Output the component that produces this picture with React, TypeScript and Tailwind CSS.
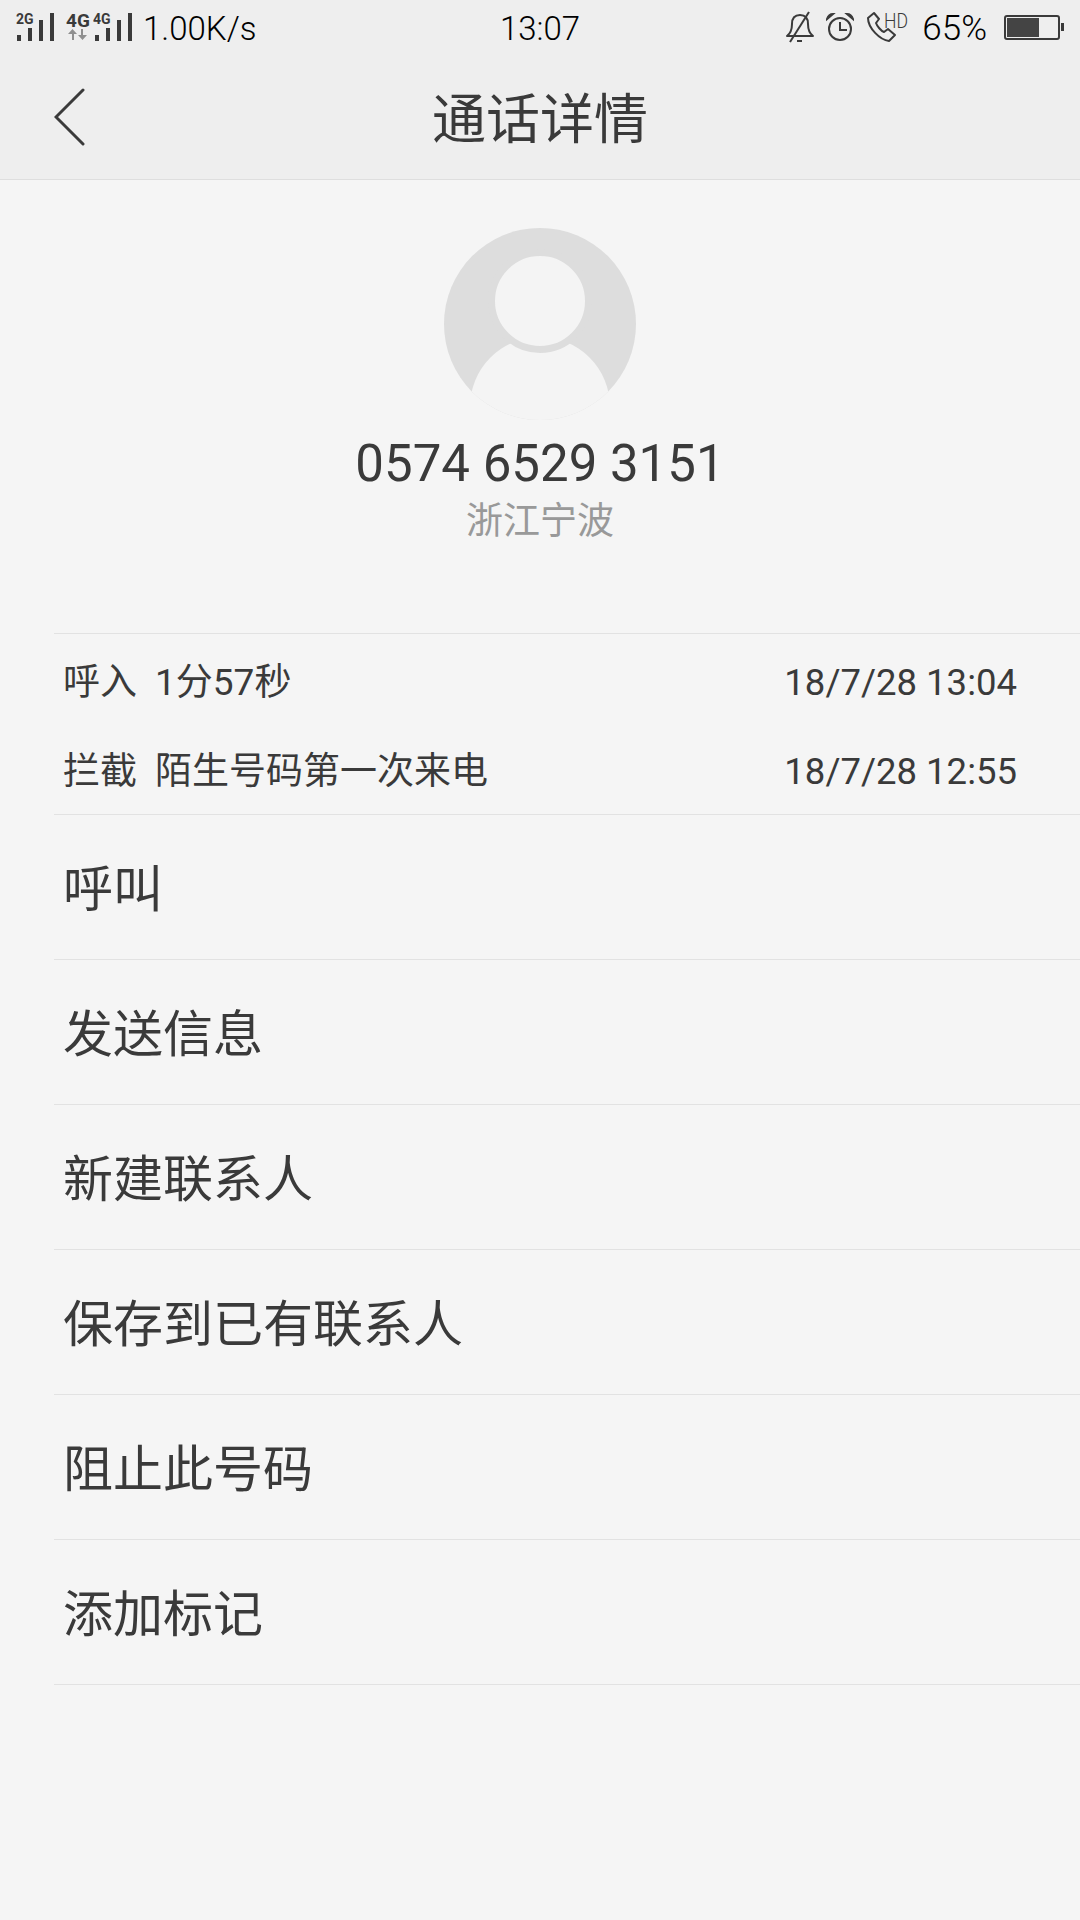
import React from 'react';

const font = { fontFamily: '"Roboto", "Noto Sans CJK SC", sans-serif' };

const actions = ['呼叫', '发送信息', '新建联系人', '保存到已有联系人', '阻止此号码', '添加标记'];

const calls = [
  { type: '呼入', detail: '1分57秒', time: '18/7/28 13:04' },
  { type: '拦截', detail: '陌生号码第一次来电', time: '18/7/28 12:55' },
];

const Signal = ({ label, offset }: { label: string; offset: number }) => (
  <svg width="40" height="32" viewBox="0 -4 40 32" fill="#3a3a3a" className="mb-1">
    <text x="0" y="11" fontSize="14" fontWeight="700" fontFamily="Roboto, sans-serif">{label}</text>
    <rect x={1 + offset} y="22" width="4" height="6" />
    <rect x={12 + offset} y="15" width="4" height="13" />
    <rect x={23 + offset} y="7" width="4" height="21" />
    <rect x={34 + offset} y="0" width="4" height="28" />
  </svg>
);

const StatusBar = () => (
  <div className="flex h-[52px] items-center pl-4 pr-4 pt-[2px] text-black">
    <div className="flex flex-1 items-center">
      <div className="w-[38px]">
        <Signal label="2G" offset={0} />
      </div>
      <svg width="27" height="32" viewBox="0 -4 27 32" className="mb-1 ml-3" fill="#3a3a3a">
        <text x="0" y="14" fontSize="19" fontWeight="700" fontFamily="Roboto, sans-serif">4G</text>
        <path d="M6 27v-6H2l4.500-5 4.500 5H8v6z" fill="#8f8f8f" />
        <path d="M15 16v6h-3l4.500 5 4.500-5h-4v-6z" fill="#8f8f8f" />
      </svg>
      <Signal label="4G" offset={1} />
      <span className="ml-[10px] mt-[2px] text-[33px] font-light leading-none" style={font}>1.00K/s</span>
    </div>
    <span className="mt-[2px] text-[33px] font-light leading-none" style={font}>13:07</span>
    <div className="flex flex-1 items-center justify-end">
      <svg width="28" height="32" viewBox="0 0 28 32" fill="none" stroke="#3a3a3a" strokeWidth="2" strokeLinejoin="round">
        <path d="M1 25c4-3 5-6 5-12 0-6 3-9 8-9s8 3 8 9c0 6 1 9 5 12z" />
        <path d="M4 31 23 1" />
        <path d="M11 30h5" />
      </svg>
      <svg width="28" height="28" viewBox="0 0 28 28" fill="none" stroke="#3a3a3a" strokeWidth="2" className="ml-3">
        <circle cx="14" cy="16" r="11" />
        <path d="M14 9v8h7" />
        <path d="M1 6c1-3 3-5 6-5zM27 6c-1-3-3-5-6-5z" fill="#3a3a3a" />
      </svg>
      <svg width="47" height="36" viewBox="0 -4 47 36" className="-mr-1.5 mb-1 ml-[13px]">
        <path d="M7 2 1 7c0 10 12 22 21 23l6-6-7-6-4 3c-3-1-7-6-8-9l3-4z" fill="none" stroke="#3a3a3a" strokeWidth="2" strokeLinejoin="round" />
        <text x="17" y="17" fontSize="20" fill="#3a3a3a" fontFamily="Roboto, sans-serif" fontWeight="300" textLength="24" lengthAdjust="spacingAndGlyphs">HD</text>
      </svg>
      <span className="ml-[14px] mt-[2px] text-[35px] font-light leading-none" style={font}>65%</span>
      <div className="ml-[17px] flex items-center">
        <div className="h-[25px] w-[56px] rounded-[3px] border-2 border-[#3a3a3a] p-[1px]">
          <div className="h-full w-[32px] bg-[#444]" />
        </div>
        <div className="ml-[1px] h-[8px] w-[3px] bg-[#3a3a3a]" />
      </div>
    </div>
  </div>
);

export default function App() {
  return (
    <div className="flex h-[1920px] w-[1080px] flex-col bg-[#f5f5f5]" style={font}>
      <div className="border-b border-[#dedede] bg-[#eeeeee]">
        <StatusBar />
        <div className="relative flex h-[127px] items-center justify-center pt-[11px]">
          <svg width="32" height="58" viewBox="0 0 32 58" fill="none" stroke="#3a3a3a" strokeWidth="3" strokeLinecap="round" className="absolute left-[54px] top-[36px]">
            <path d="M29 2 2 29l27 27" />
          </svg>
          <h1 className="text-[54px] font-normal leading-none text-[#3a3a3a]">通话详情</h1>
        </div>
      </div>

      <div className="flex flex-col items-center pt-[48px]">
        <div className="relative h-[192px] w-[192px] overflow-hidden rounded-full bg-[#dddddd]">
          <div className="absolute left-[26px] top-[109px] h-[140px] w-[140px] rounded-full bg-[#f4f4f4]" />
          <div className="absolute left-[44px] top-[21px] h-[104px] w-[104px] rounded-full border-[7px] border-[#dddddd] bg-[#f4f4f4]" />
        </div>
        <div className="mt-[14px] text-[51px] leading-[60px] text-[#3a3a3a]">0574 6529 3151</div>
        <div className="mt-[6px] text-[37px] leading-[44px] text-[#999999]">浙江宁波</div>
      </div>

      <div className="ml-[54px] mt-[89px] border-y border-[#e2e2e2] pt-[2px]">
        {calls.map((call) => (
          <div key={call.time} className="flex h-[89px] items-center justify-between pl-[9px] pr-[63px] pt-[5px] text-[37px] text-[#3a3a3a]">
            <span>
              {call.type}
              <span className="ml-[18px]">{call.detail}</span>
            </span>
            <span className="text-[36.5px]">{call.time}</span>
          </div>
        ))}
      </div>

      <div className="ml-[54px] flex flex-col">
        {actions.map((label) => (
          <div key={label} className="flex h-[145px] items-center border-b border-[#e2e2e2] pl-[9px] pt-[6px] text-[50px] text-[#3a3a3a]">
            {label}
          </div>
        ))}
      </div>
    </div>
  );
}
